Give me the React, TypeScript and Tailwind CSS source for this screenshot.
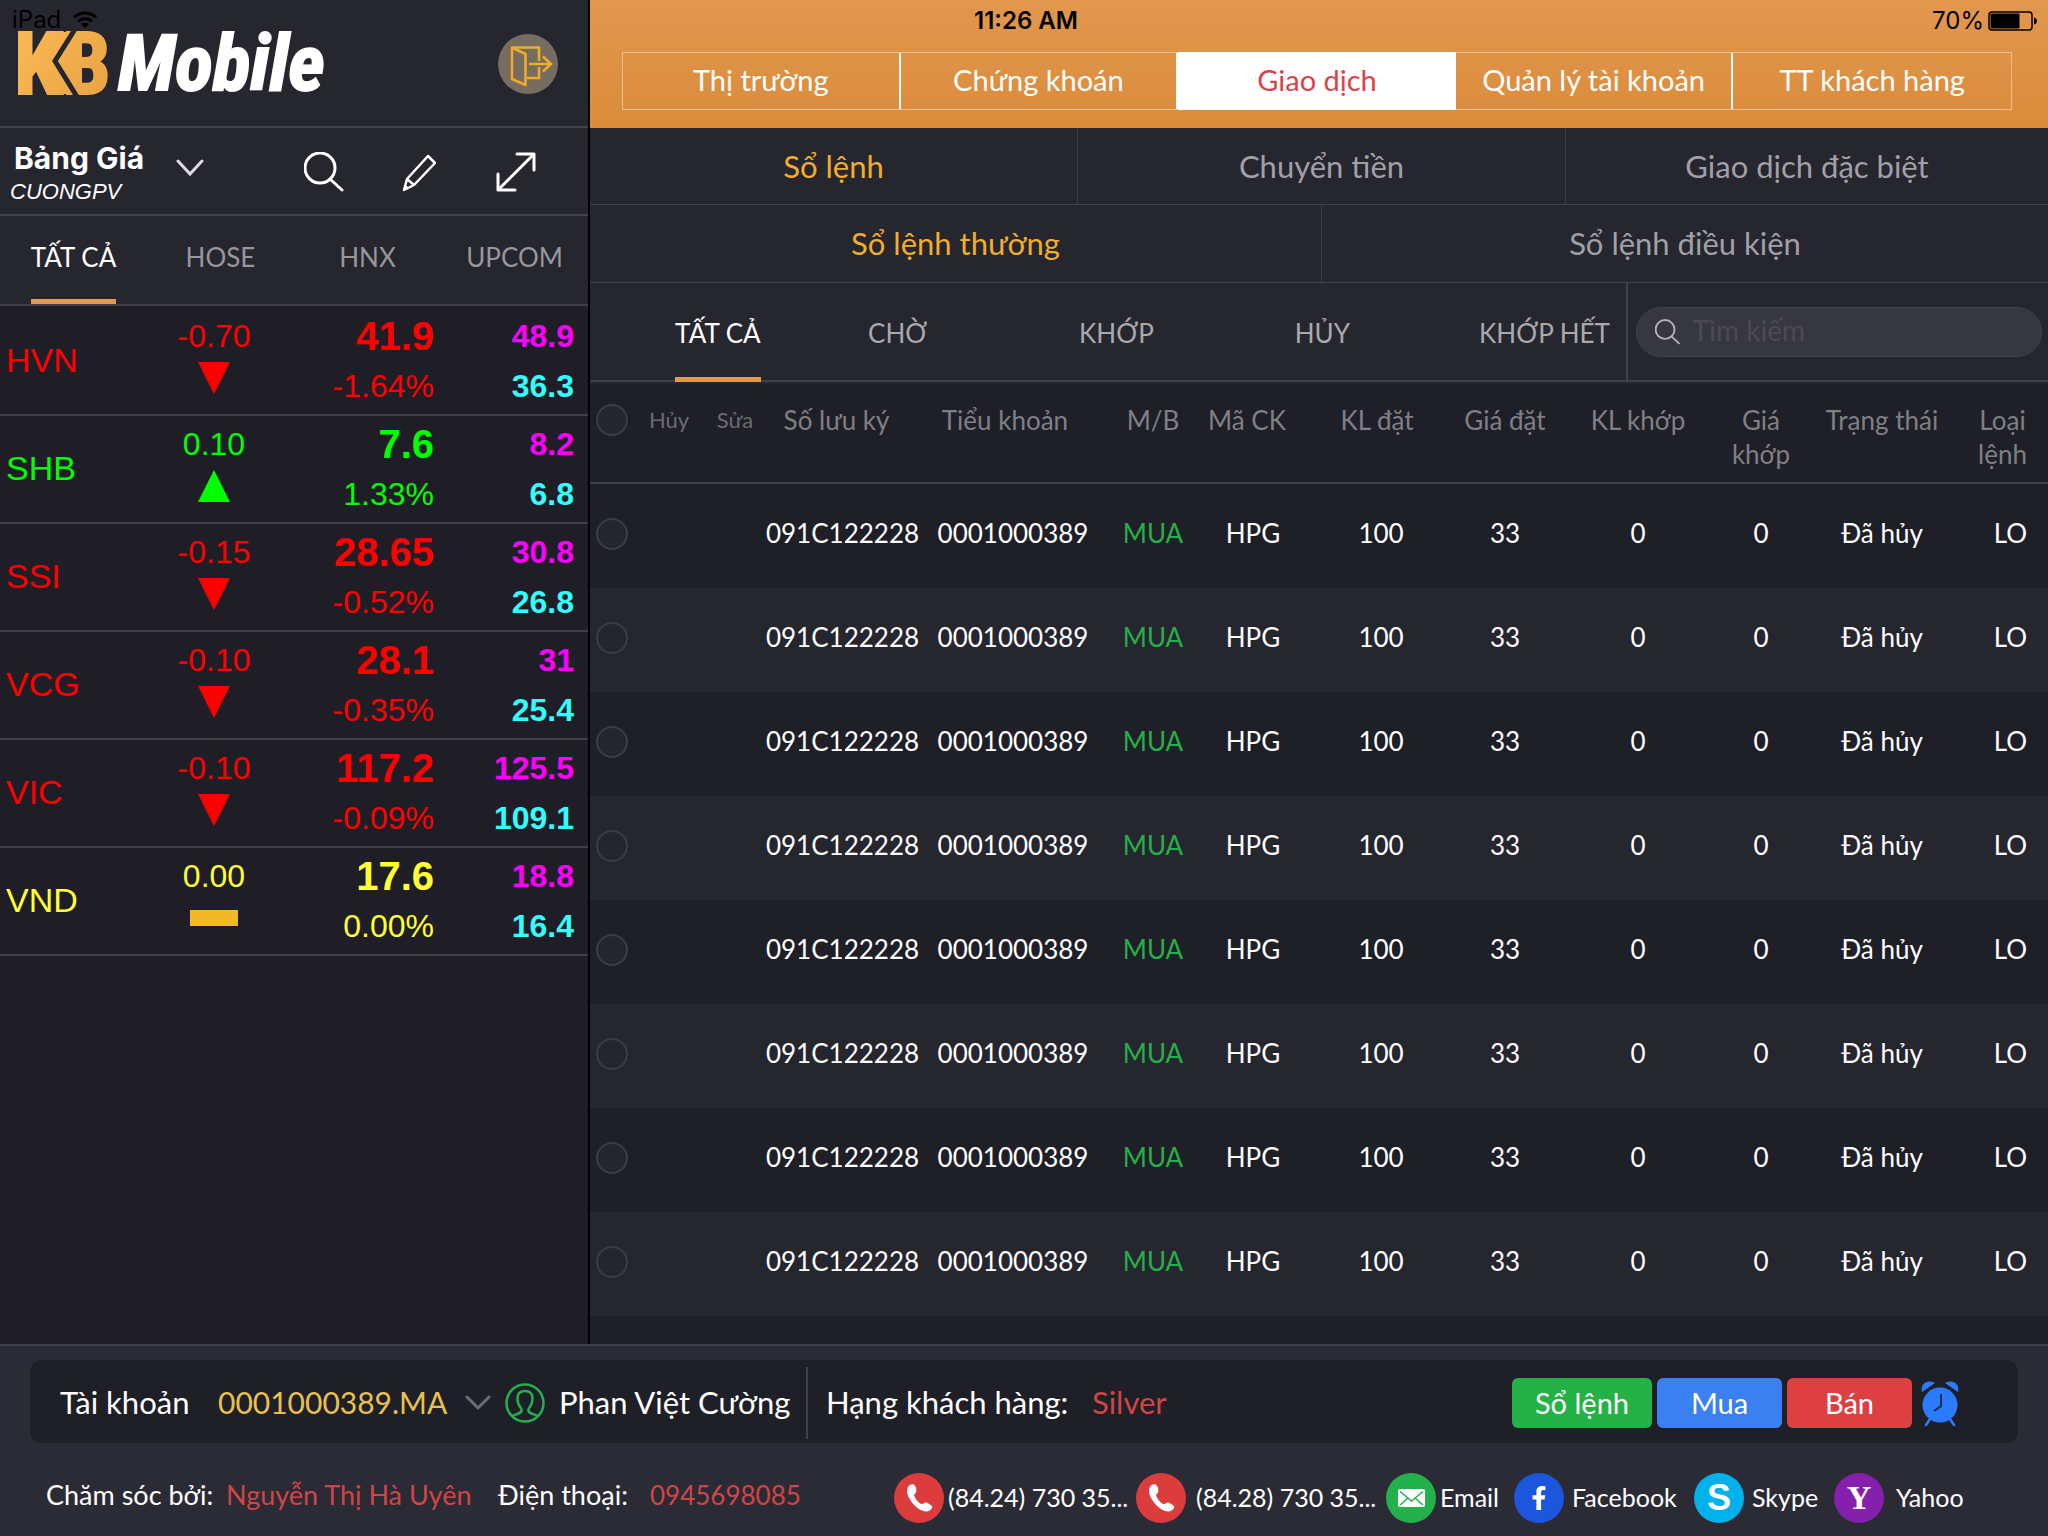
import { useState } from "react";
import { FaFacebookF } from "react-icons/fa";

const QUOTES = [
  { code: "HVN", change: "-0.70", price: "41.9", percent: "-1.64%", ceil: "48.9", floor: "36.3", trend: "down" },
  { code: "SHB", change: "0.10", price: "7.6", percent: "1.33%", ceil: "8.2", floor: "6.8", trend: "up" },
  { code: "SSI", change: "-0.15", price: "28.65", percent: "-0.52%", ceil: "30.8", floor: "26.8", trend: "down" },
  { code: "VCG", change: "-0.10", price: "28.1", percent: "-0.35%", ceil: "31", floor: "25.4", trend: "down" },
  { code: "VIC", change: "-0.10", price: "117.2", percent: "-0.09%", ceil: "125.5", floor: "109.1", trend: "down" },
  { code: "VND", change: "0.00", price: "17.6", percent: "0.00%", ceil: "18.8", floor: "16.4", trend: "flat" },
];

const TREND_COLOR: Record<string, string> = {
  up: "text-[#00ff00]",
  down: "text-[#ff0000]",
  flat: "text-[#ffff33]",
};

const FILTERS = ["TẤT CẢ", "CHỜ", "KHỚP", "HỦY", "KHỚP HẾT"];

const COLUMNS = [
  { label: "Hủy", col: "w-[82px]", head: "text-[22px] text-[#6c6c74]" },
  { label: "Sửa", col: "w-[50px]", head: "text-[22px] text-[#6c6c74]" },
  { label: "Số lưu ký", col: "w-[165px]", head: "pr-3" },
  { label: "Tiểu khoản", col: "w-[176px]", head: "pr-4" },
  { label: "M/B", col: "w-[104px]", head: "" },
  { label: "Mã CK", col: "w-[96px]", head: "pr-3" },
  { label: "KL đặt", col: "w-[160px]", head: "pr-2" },
  { label: "Giá đặt", col: "w-[88px]", head: "" },
  { label: "KL khớp", col: "w-[178px]", head: "" },
  { label: "Giá khớp", col: "w-[68px]", head: "whitespace-normal" },
  { label: "Trạng thái", col: "w-[174px]", head: "" },
  { label: "Loại lệnh", col: "w-[79px]", head: "whitespace-normal pr-3" },
];

const ORDERS = Array.from({ length: 8 }, (_, id) => ({
  id,
  cells: ["", "", "091C122228", "0001000389", "MUA", "HPG", "100", "33", "0", "0", "Đã hủy", "LO"],
}));

function TrendMark({ trend }: { trend: string }) {
  if (trend === "flat") return <span className="block h-4 w-12 bg-[#f3b72a]" />;
  return (
    <svg viewBox="0 0 32 32" className="size-8" fill="currentColor">
      {trend === "up" ? <path d="M16 0 32 32H0Z" /> : <path d="M0 0H32L16 32Z" />}
    </svg>
  );
}

function Logo() {
  return (
    <svg viewBox="0 0 320 72" className="h-[72px] w-[320px] overflow-visible" role="img" aria-label="KB Mobile">
      <defs>
        <linearGradient id="kb" gradientUnits="userSpaceOnUse" x1="0" y1="0" x2="95" y2="67">
          <stop offset="0" stopColor="#fbb955" />
          <stop offset="1" stopColor="#e8a342" />
        </linearGradient>
      </defs>
      <g fontFamily="'Roboto Condensed', Roboto, sans-serif" fontWeight="700">
        <g fill="url(#kb)" stroke="url(#kb)" strokeWidth="2" fontSize="87">
          <text x="-2" y="66">K</text>
          <text x="46" y="66">B</text>
          <path d="M37 4H66V66H38L26 41 21 33Z" stroke="none" />
        </g>
        <path d="M61 -2 39 33 63 72" fill="none" stroke="#26262f" strokeWidth="5" />
        <text x="102" y="62" fill="#fff" stroke="#fff" strokeWidth="2" fontStyle="italic" fontSize="78">
          Mobile
        </text>
      </g>
    </svg>
  );
}

function SearchIcon({ className }: { className: string }) {
  return (
    <svg viewBox="0 0 40 40" className={className} fill="none" stroke="currentColor" strokeWidth="3" strokeLinecap="round">
      <circle cx="16" cy="16" r="15" />
      <path d="M26 27 38 38" />
    </svg>
  );
}

function Sidebar() {
  const [market, setMarket] = useState("TẤT CẢ");

  return (
    <aside className="flex w-[590px] shrink-0 flex-col border-r-2 border-black bg-[#1f1e26]">
      <header className="h-32 border-b-2 border-[#41414a] bg-[#26262f]">
        <div className="flex h-7 items-end gap-3 pl-3 font-['Inter',sans-serif] text-2xl leading-6 text-black">
          <span className="leading-4">iPad</span>
          <svg viewBox="0 0 24 17" className="h-[17px] w-6" fill="none" stroke="currentColor" strokeWidth="3">
            <path d="M1 6.500a15.500 15.500 0 0 1 22 0M5 10.500a10 10 0 0 1 14 0" />
            <path d="M12 17 8 13a6 6 0 0 1 8 0Z" fill="currentColor" stroke="none" />
          </svg>
        </div>
        <div className="flex items-center justify-between pr-[30px] pl-4">
          <Logo />
          <button aria-label="Đăng xuất">
            <svg viewBox="0 0 60 60" className="size-[60px]" fill="none" stroke="#f2ac27" strokeWidth="2.500">
              <circle cx="30" cy="30" r="30" fill="#776c60" stroke="none" />
              <path d="M14 13.500H41V27M41 33V44H29" />
              <path d="M14 13.500V45L27.500 51V20Z" strokeLinejoin="round" />
              <path d="M31 30H53M45 22.500 53 30 45 37.500" />
            </svg>
          </button>
        </div>
      </header>

      <div className="flex h-[88px] items-center border-b-2 border-[#41414a] bg-[#26262f] pt-[2px] pr-[52px] text-white">
        <button className="flex items-center gap-8 text-left">
          <span className="w-36 pt-1 whitespace-nowrap">
            <span className="block pl-[14px] font-['Inter',sans-serif] text-[30px] leading-9 font-bold">Bảng Giá</span>
            <span className="block pl-[10px] font-['Liberation_Sans',sans-serif] text-[22px] leading-8 italic">CUONGPV</span>
          </span>
          <svg viewBox="0 0 28 18" className="mb-2 h-[18px] w-7" fill="none" stroke="#dcdce0" strokeWidth="3" strokeLinecap="round">
            <path d="M2 2 14 15 26 2" />
          </svg>
        </button>
        <div className="ml-auto flex items-center gap-14">
          <button aria-label="Tìm mã">
            <SearchIcon className="size-10" />
          </button>
          <button aria-label="Sửa danh mục">
            <svg viewBox="0 0 40 40" className="size-10" fill="none" stroke="currentColor" strokeWidth="2.500" strokeLinejoin="round">
              <path d="M28 4 35 11 14 33 4 38 7 27ZM7 27l7 6M5 34l3 3" />
            </svg>
          </button>
          <button aria-label="Mở rộng">
            <svg viewBox="0 0 40 40" className="size-10" fill="none" stroke="currentColor" strokeWidth="3" strokeLinecap="round" strokeLinejoin="round">
              <path d="M21 2H38V18M38 2 2 38M2 22V38H19" />
            </svg>
          </button>
        </div>
      </div>

      <nav className="mb-[2px] grid h-[90px] grid-cols-4 justify-items-center border-b-2 border-[#41414a] bg-[#26262f] text-[26px]">
        {["TẤT CẢ", "HOSE", "HNX", "UPCOM"].map((m) => (
          <button
            key={m}
            onClick={() => setMarket(m)}
            className={
              m === market
                ? "border-b-5 border-[#e09a52] text-white"
                : "border-b-5 border-transparent text-[#97979d]"
            }
          >
            {m}
          </button>
        ))}
      </nav>

      <ul className="font-['Liberation_Sans',sans-serif] text-[32px] leading-[50px]">
        {QUOTES.map((q) => (
          <li
            key={q.code}
            className={`grid h-[108px] grid-cols-[154px_120px_1fr_140px] items-center border-b-2 border-[#41414a] pr-[14px] ${TREND_COLOR[q.trend]}`}
          >
            <span className="pb-[2px] pl-[6px] text-[34px]">{q.code}</span>
            <div className="flex flex-col items-center">
              <span>{q.change}</span>
              <span className="flex h-[50px] items-center pb-4">
                <TrendMark trend={q.trend} />
              </span>
            </div>
            <div className="flex flex-col text-right">
              <span className="text-[40px] font-bold">{q.price}</span>
              <span>{q.percent}</span>
            </div>
            <div className="flex flex-col text-right font-bold">
              <span className="text-[#ff00ff]">{q.ceil}</span>
              <span className="text-[#33ffff]">{q.floor}</span>
            </div>
          </li>
        ))}
      </ul>
    </aside>
  );
}

function TopNav() {
  const [page, setPage] = useState("Giao dịch");

  return (
    <header className="h-32 bg-linear-to-b from-[#e1974d] to-[#db8c3b]">
      <div className="flex h-[52px] items-start justify-between pt-[6px] pr-[10px] font-['Inter',sans-serif] text-2xl leading-[30px] text-black">
        <span className="w-[384px]" />
        <span className="font-semibold">11:26 AM</span>
        <span className="ml-auto flex items-center gap-1">
          70%
          <svg viewBox="0 0 50 20" className="h-5 w-[50px]">
            <rect x="1" y="1" width="43" height="18" rx="3" fill="none" stroke="#000" strokeWidth="1.500" />
            <rect x="2.500" y="2.500" width="29" height="15" rx="1" />
            <path d="M46 6.500c4 1 4 6 0 7Z" />
          </svg>
        </span>
      </div>
      <nav className="mr-9 ml-8 grid h-[58px] grid-cols-5 border border-[#efbf90] text-[29px]">
        {["Thị trường", "Chứng khoán", "Giao dịch", "Quản lý tài khoản", "TT khách hàng"].map((p) => (
          <button
            key={p}
            onClick={() => setPage(p)}
            className={
              p === page
                ? "-my-px bg-white pb-[2px] text-[#d9434a]"
                : "border-r-2 border-white pb-[2px] text-white last:border-r-0"
            }
          >
            {p}
          </button>
        ))}
      </nav>
    </header>
  );
}

function OrderTabs() {
  const [filter, setFilter] = useState("TẤT CẢ");
  const [query, setQuery] = useState("");

  return (
    <div className="bg-[#26262f] pb-[2px] text-[31px] text-[#a0a0a6]">
      <div className="grid h-[77px] grid-cols-[488fr_488fr_482fr] border-b border-[#41414a]">
        <button className="border-r border-[#3a3a43] text-[#f1ad2c]">Sổ lệnh</button>
        <button className="border-r border-[#3a3a43]">Chuyển tiền</button>
        <button>Giao dịch đặc biệt</button>
      </div>
      <div className="grid h-[78px] grid-cols-[732fr_726fr] border-b border-[#41414a]">
        <button className="border-r border-[#3a3a43] text-[#f1ad2c]">Sổ lệnh thường</button>
        <button>Sổ lệnh điều kiện</button>
      </div>
      <div className="flex h-[99px] border-b-2 border-[#41414a] text-[26px]">
        <div className="grid flex-1 grid-cols-[256fr_104fr_334fr_78fr_265fr] justify-items-center border-r-2 border-[#41414a]">
          {FILTERS.map((f) => (
            <button
              key={f}
              onClick={() => setFilter(f)}
              className={
                f === filter
                  ? "-mb-[2px] border-b-5 border-[#e09a52] pt-[6px] text-white"
                  : "border-b-5 border-transparent pt-2 text-[#a9a9ae] last:mr-4 last:justify-self-end"
              }
            >
              {f}
            </button>
          ))}
        </div>
        <div className="flex w-[420px] items-center pr-[6px] pl-2">
          <label className="flex h-[50px] flex-1 items-center gap-3 rounded-full border border-[#40404a] bg-[#373740] px-[18px] text-[#b4b4b8]">
            <SearchIcon className="size-7" />
            <input
              value={query}
              onChange={(e) => setQuery(e.target.value)}
              placeholder="Tìm kiếm"
              aria-label="Tìm kiếm"
              className="w-full bg-transparent pb-1 text-[28px] outline-none placeholder:text-[#4b4b54]"
            />
          </label>
        </div>
      </div>
    </div>
  );
}

const checkClass = "ml-[6px] block size-8 appearance-none rounded-full border-2 border-[#3d3d46] bg-[#25252e]";

function OrderTable() {
  return (
    <table className="w-full table-fixed border-separate border-spacing-0 text-center text-[26px] whitespace-nowrap text-white">
      <colgroup>
        <col className="w-[38px]" />
        {COLUMNS.map((c) => (
          <col key={c.label} className={c.col} />
        ))}
      </colgroup>
      <thead>
        <tr className="h-[100px] align-top text-[26px] leading-[34px] text-[#7f7f86]">
          <th className="border-b-2 border-[#41414a] pt-5">
            <input type="checkbox" aria-label="Chọn tất cả" className={checkClass} />
          </th>
          {COLUMNS.map((c) => (
            <th key={c.label} className={`border-b-2 border-[#41414a] pt-[19px] font-normal ${c.head}`}>
              {c.label}
            </th>
          ))}
        </tr>
      </thead>
      <tbody>
        {ORDERS.map((o) => (
          <tr key={o.id} className="h-[104px] even:bg-[#26262f]">
            <td className="pb-1">
              <input type="checkbox" aria-label={`Chọn lệnh ${o.id + 1}`} className={checkClass} />
            </td>
            {o.cells.map((cell, i) => (
              <td key={i} className={cell === "MUA" ? "pb-[6px] text-[#27ae4c]" : "pb-[6px] last:pl-1"}>
                {cell}
              </td>
            ))}
          </tr>
        ))}
      </tbody>
    </table>
  );
}

function PhoneIcon() {
  return (
    <svg viewBox="0 0 50 50" className="size-[50px] shrink-0">
      <circle cx="25" cy="25" r="25" fill="#dd3c3d" />
      <path
        d="M17 11.500c2.500-1 4 0 5 3.500 1 3.500 0 5-1.500 6-1 1 .5 4 2.500 6.500s4 4 5.500 3.500c2-1 3-2 5-1 4 2 5.500 3.500 4.500 5-2 3.500-5.500 4.500-10 2.500-6-2.500-12-9-14.500-16-1.500-5 .5-9 3.500-10Z"
        fill="#fff"
      />
    </svg>
  );
}

function MailIcon() {
  return (
    <svg viewBox="0 0 50 50" className="size-[50px] shrink-0">
      <circle cx="25" cy="25" r="25" fill="#22b14a" />
      <rect x="12" y="16" width="27" height="18" rx="2" fill="#fff" />
      <path d="M14 18.500 25.500 28 37 18.500M14 32l8-7M37 32l-8-7" fill="none" stroke="#22b14a" strokeWidth="1.500" />
    </svg>
  );
}

function FacebookIcon() {
  return (
    <span className="flex size-[50px] shrink-0 items-center justify-center rounded-full bg-[#1c56dd] text-white">
      <FaFacebookF className="size-6" />
    </span>
  );
}

function SkypeIcon() {
  return (
    <span className="flex size-[50px] shrink-0 items-center justify-center rounded-full bg-[#00b1ec] font-['Liberation_Sans',sans-serif] text-4xl font-bold text-white">
      S
    </span>
  );
}

function YahooIcon() {
  return (
    <span className="flex size-[50px] shrink-0 items-center justify-center rounded-full bg-[#8420ab] font-['Liberation_Serif',serif] text-[34px] font-bold text-white">
      Y
    </span>
  );
}

function Footer() {
  return (
    <footer className="border-t-2 border-[#3f3f49] bg-[#2b2b36] px-[30px] pt-[14px] text-white">
      <div className="flex h-[83px] items-center rounded-xl bg-[#1f1f28] pt-[2px] pr-[59px] pl-[30px] text-[31px]">
        <span className="w-[158px]">Tài khoản</span>
        <button className="flex w-[287px] items-center justify-between pr-[14px] text-[30px] text-[#e8c24e]">
          0001000389.MA
          <svg viewBox="0 0 26 16" className="h-4 w-[26px]" fill="none" stroke="#6d6d74" strokeWidth="3" strokeLinecap="round">
            <path d="M2 2 13 13 24 2" />
          </svg>
        </button>
        <svg viewBox="0 0 40 40" className="mr-[14px] size-10" fill="none" stroke="#27ae4c" strokeWidth="2.500">
          <circle cx="20" cy="20" r="18.500" />
          <path d="M7 33c3-1.500 7-2 9-4 1.500-1.500.5-3-.5-4.500-2-2.500-3-6-3-9C12.500 11 15 8 20 8s7.500 3 7.500 7.500c0 3-1 6.500-3 9-1 1.500-2 3-.5 4.500 2 2 6 2.500 9 4" />
        </svg>
        <span className="w-[247px]">Phan Việt Cường</span>
        <span className="h-[72px] w-[2px] bg-[#41414a]" />
        <span className="w-[284px] pl-[18px]">Hạng khách hàng:</span>
        <span className="text-[#d04545]">Silver</span>
        <div className="ml-auto flex items-center gap-[5px] text-[29px]">
          <button className="h-[50px] w-[140px] rounded-md bg-[#24b247]">Sổ lệnh</button>
          <button className="h-[50px] w-[125px] rounded-md bg-[#3a80f0]">Mua</button>
          <button className="h-[50px] w-[125px] rounded-md bg-[#de4042]">Bán</button>
          <button aria-label="Nhắc lệnh" className="pl-1">
            <svg viewBox="0 0 38 46" className="h-[46px] w-[38px]" fill="#2b7bff">
              <circle cx="19" cy="25" r="17.500" />
              <path d="M1 12C-1 4 6-1 14 3ZM37 12C39 4 32-1 24 3Z" />
              <path d="M9 39 5 45M29 39l4 6" stroke="#2b7bff" strokeWidth="2.500" strokeLinecap="round" />
              <path d="M20 14V26L13 31" fill="none" stroke="#1b2a52" strokeWidth="2" />
            </svg>
          </button>
        </div>
      </div>

      <div className="flex h-[93px] items-center pt-4 pl-4 text-[25px] whitespace-nowrap">
        <div className="flex w-[848px] items-baseline pb-1 text-[27px]">
          <span className="w-[180px]">Chăm sóc bởi:</span>
          <span className="w-[272px] text-[#d04545]">Nguyễn Thị Hà Uyên</span>
          <span className="w-[152px]">Điện thoại:</span>
          <span className="text-[26px] text-[#d04545]">0945698085</span>
        </div>
        <a href="#hanoi" className="flex w-[242px] items-center gap-1">
          <PhoneIcon />
          (84.24) 730 35...
        </a>
        <a href="#hcm" className="flex w-[250px] items-center gap-[10px]">
          <PhoneIcon />
          (84.28) 730 35...
        </a>
        <a href="#email" className="flex w-32 items-center gap-1">
          <MailIcon />
          Email
        </a>
        <a href="#facebook" className="flex w-[180px] items-center gap-2">
          <FacebookIcon />
          Facebook
        </a>
        <a href="#skype" className="flex w-[140px] items-center gap-2">
          <SkypeIcon />
          Skype
        </a>
        <a href="#yahoo" className="flex items-center gap-3">
          <YahooIcon />
          Yahoo
        </a>
      </div>
    </footer>
  );
}

export default function App() {
  return (
    <div className="flex min-h-screen flex-col bg-[#1f1f28] font-['Lato',sans-serif]">
      <div className="flex flex-1">
        <Sidebar />
        <main className="min-w-0 flex-1">
          <TopNav />
          <OrderTabs />
          <OrderTable />
        </main>
      </div>
      <Footer />
    </div>
  );
}
